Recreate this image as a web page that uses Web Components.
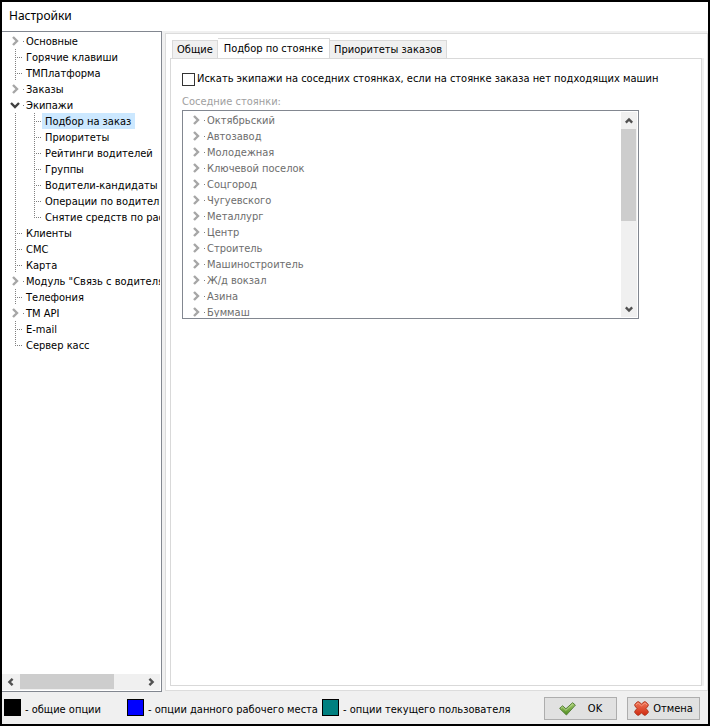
<!DOCTYPE html>
<html lang="ru">
<head>
    <meta charset="utf-8">
    <title>Настройки</title>
    <style>
        body {
            margin: 0;
            font-family: "DejaVu Sans Condensed", Tahoma, "Liberation Sans", sans-serif;
            font-size: 11px;
            line-height: 16px;
            color: #000;
        }
    </style>
</head>
<body>
    <settings-window></settings-window>

    <script>
        // Узел дерева: вложенные узлы передаются через slot
        class TreeNode extends HTMLElement {
            connectedCallback() {
                const label = this.getAttribute('label');
                const open = this.hasAttribute('open');
                const expandable = this.hasAttribute('expandable');
                const arrow = open ? 'M1 3l4 4 4-4' : 'M3 1l4 4-4 4';

                this.attachShadow({ mode: 'open' });
                this.shadowRoot.innerHTML = `
                <style>
                    :host {
                        display: block;
                        --dots: repeating-linear-gradient(to bottom, #808080 0 1px, transparent 1px 2px);
                    }

                    .row {
                        display: flex;
                        height: 16px;
                    }

                    .branch {
                        flex: none;
                        display: flex;
                        align-items: center;
                        box-sizing: border-box;
                        width: 16px;
                        padding: 0 0 0 3px;
                        border: 0;
                        background:
                            var(--dots) 8px 0 / 1px 100% no-repeat,
                            repeating-linear-gradient(to right, #808080 0 1px, transparent 1px 2px) 8px 8px / 8px 1px no-repeat;
                    }

                    :host([last]) .branch {
                        background-size: 1px 9px, 8px 1px;
                    }

                    button.branch {
                        background: linear-gradient(#808080, #808080) 16px 8px / 1px 1px no-repeat;
                        width: 18px;
                        margin-right: -2px;
                    }

                    svg {
                        flex: none;
                        width: 10px;
                        height: 10px;
                        fill: none;
                        stroke: ${open ? '#404040' : '#a6a6a6'};
                        stroke-width: 2.4;
                    }

                    .label {
                        padding: 0 4px 0 3px;
                        line-height: 18px;
                        white-space: nowrap;
                    }

                    :host([selected]) .label {
                        background-color: #cce8ff;
                    }

                    .children {
                        padding-left: 19px;
                        background: var(--dots) 8px 0 / 1px 100% no-repeat;
                    }
                </style>
                <div class="row">
                    ${expandable
                        ? `<button class="branch" type="button" aria-label="${label.replace(/"/g, '&quot;')}"><svg viewBox="0 0 10 10"><path d="${arrow}"/></svg></button>`
                        : '<span class="branch"></span>'}
                    <span class="label"></span>
                </div>
                ${open ? '<div class="children"><slot></slot></div>' : ''}
                `;
                this.shadowRoot.querySelector('.label').textContent = label;
            }
        }

        // Полоса прокрутки, вертикальная или горизонтальная
        class ScrollStrip extends HTMLElement {
            connectedCallback() {
                const horizontal = this.hasAttribute('horizontal');
                const back = horizontal ? 'M7 1L3 5l4 4' : 'M1 7l4-4 4 4';
                const forward = horizontal ? 'M3 1l4 4-4 4' : 'M1 3l4 4 4-4';

                this.attachShadow({ mode: 'open' });
                this.shadowRoot.innerHTML = `
                <style>
                    :host {
                        flex: none;
                        display: flex;
                        flex-direction: ${horizontal ? 'row' : 'column'};
                        ${horizontal ? 'height' : 'width'}: 16px;
                        background-color: #f0f0f0;
                    }

                    button {
                        flex: none;
                        display: flex;
                        align-items: center;
                        justify-content: center;
                        width: ${horizontal ? 18 : 16}px;
                        height: ${horizontal ? 16 : 17}px;
                        padding: 0;
                        border: 0;
                        background: none;
                    }

                    svg {
                        width: 8px;
                        height: 8px;
                        fill: none;
                        stroke: #505050;
                        stroke-width: 3;
                    }

                    .track {
                        flex: 1;
                    }

                    .thumb {
                        ${horizontal ? 'height' : 'width'}: 15px;
                        ${horizontal ? 'width' : 'height'}: var(--thumb, 50%);
                        background-color: #cdcdcd;
                    }
                </style>
                <button type="button" aria-label="Назад"><svg viewBox="0 0 10 10"><path d="${back}"/></svg></button>
                <div class="track"><div class="thumb"></div></div>
                <button type="button" aria-label="Вперёд"><svg viewBox="0 0 10 10"><path d="${forward}"/></svg></button>
                `;
            }
        }

        class SettingsTree extends HTMLElement {
            connectedCallback() {
                this.attachShadow({ mode: 'open' });
                this.shadowRoot.innerHTML = `
                <style>
                    :host {
                        display: flex;
                        flex-direction: column;
                        box-sizing: border-box;
                        min-width: 0;
                        border: 1px solid #828790;
                        border-left: 0;
                        padding: 1px 1px 1px 0;
                        background-color: white;
                    }

                    .nodes {
                        flex: 1;
                        padding: 0 0 0 5px;
                        overflow: hidden;
                    }

                    scroll-strip {
                        --thumb: 77%;
                    }
                </style>
                <div class="nodes">
                    <tree-node label="Основные" expandable></tree-node>
                    <tree-node label="Горячие клавиши"></tree-node>
                    <tree-node label="ТМПлатформа"></tree-node>
                    <tree-node label="Заказы" expandable></tree-node>
                    <tree-node label="Экипажи" expandable open>
                        <tree-node label="Подбор на заказ" selected></tree-node>
                        <tree-node label="Приоритеты"></tree-node>
                        <tree-node label="Рейтинги водителей"></tree-node>
                        <tree-node label="Группы"></tree-node>
                        <tree-node label="Водители-кандидаты"></tree-node>
                        <tree-node label="Операции по водителям"></tree-node>
                        <tree-node label="Снятие средств по расписанию" last></tree-node>
                    </tree-node>
                    <tree-node label="Клиенты"></tree-node>
                    <tree-node label="СМС"></tree-node>
                    <tree-node label="Карта"></tree-node>
                    <tree-node label='Модуль "Связь с водителями"' expandable></tree-node>
                    <tree-node label="Телефония"></tree-node>
                    <tree-node label="TM API" expandable></tree-node>
                    <tree-node label="E-mail"></tree-node>
                    <tree-node label="Сервер касс" last></tree-node>
                </div>
                <scroll-strip horizontal></scroll-strip>
                `;
            }
        }

        class ParkingList extends HTMLElement {
            connectedCallback() {
                const parkings = ['Октябрьский', 'Автозавод', 'Молодежная', 'Ключевой поселок', 'Соцгород',
                    'Чугуевского', 'Металлург', 'Центр', 'Строитель', 'Машиностроитель', 'Ж/д вокзал', 'Азина', 'Буммаш'];

                this.attachShadow({ mode: 'open' });
                this.shadowRoot.innerHTML = `
                <style>
                    :host {
                        display: flex;
                        box-sizing: border-box;
                        width: 90%;
                        height: 209px;
                        padding: 1px 1px 1px 5px;
                        border: 1px solid #828790;
                        color: #6d6d6d;
                    }

                    .nodes {
                        flex: 1;
                        overflow: hidden;
                    }

                    scroll-strip {
                        --thumb: 54%;
                    }
                </style>
                <div class="nodes">
                    ${parkings.map(name => `<tree-node label="${name}" expandable></tree-node>`).join('')}
                </div>
                <scroll-strip></scroll-strip>
                `;
            }
        }

        class SettingsTabs extends HTMLElement {
            connectedCallback() {
                this.attachShadow({ mode: 'open' });
                this.shadowRoot.innerHTML = `
                <style>
                    :host {
                        display: flex;
                        flex-direction: column;
                        min-width: 0;
                        padding: 4px 3px 4px 4px;
                        border: 1px solid #dcdcdc;
                        background-color: white;
                    }

                    .tabs {
                        display: flex;
                        align-items: flex-end;
                        padding-left: 2px;
                    }

                    .tabs button {
                        height: 18px;
                        padding: 1px 4px 0;
                        border: 1px solid #d9d9d9;
                        border-bottom: 0;
                        background-color: #f0f0f0;
                        font: inherit;
                        line-height: 16px;
                        color: inherit;
                        white-space: nowrap;
                    }

                    .tabs button + button {
                        border-left: 0;
                    }

                    .tabs .active {
                        height: 21px;
                        margin-bottom: -1px;
                        padding: 0 6px 1px;
                        background-color: white;
                    }

                    .page {
                        flex: 1;
                        padding: 12px 11px;
                        border: 1px solid #d9d9d9;
                        box-shadow: 2px 0 #f0f0f0;
                        margin-right: 2px;
                    }

                    .check {
                        display: flex;
                        align-items: center;
                        gap: 2px;
                        white-space: nowrap;
                    }

                    input {
                        flex: none;
                        appearance: none;
                        width: 13px;
                        height: 13px;
                        margin: 0;
                        border: 1px solid #333;
                        background-color: white;
                    }

                    input:checked {
                        background-color: #333;
                    }

                    .caption {
                        margin: 7px 0 0;
                        color: #a0a0a0;
                    }
                </style>
                <div class="tabs" role="tablist">
                    <button type="button" role="tab">Общие</button>
                    <button type="button" role="tab" class="active" aria-selected="true">Подбор по стоянке</button>
                    <button type="button" role="tab">Приоритеты заказов</button>
                </div>
                <div class="page" role="tabpanel">
                    <label class="check">
                        <input type="checkbox">
                        Искать экипажи на соседних стоянках, если на стоянке заказа нет подходящих машин
                    </label>
                    <p class="caption">Соседние стоянки:</p>
                    <parking-list></parking-list>
                </div>
                `;
            }
        }

        class LegendItem extends HTMLElement {
            connectedCallback() {
                this.attachShadow({ mode: 'open' });
                this.shadowRoot.innerHTML = `
                <style>
                    :host {
                        display: flex;
                        gap: 4px;
                        white-space: nowrap;
                    }

                    i {
                        flex: none;
                        box-sizing: border-box;
                        width: 17px;
                        height: 17px;
                        border: 1px solid black;
                        background-color: var(--swatch);
                    }

                    span {
                        padding-top: 3px;
                    }
                </style>
                <i></i><span><slot></slot></span>
                `;
            }
        }

        class DialogButton extends HTMLElement {
            connectedCallback() {
                this.attachShadow({ mode: 'open' });
                this.shadowRoot.innerHTML = `
                <style>
                    :host {
                        display: block;
                    }

                    button {
                        display: flex;
                        align-items: center;
                        justify-content: center;
                        gap: var(--gap, 4px);
                        box-sizing: border-box;
                        width: 73px;
                        height: 23px;
                        padding: 0;
                        border: 1px solid #adadad;
                        background-color: #e1e1e1;
                        font: inherit;
                        color: inherit;
                    }

                    button:hover {
                        border-color: #0078d7;
                        background-color: #e5f1fb;
                    }
                </style>
                <button type="button"><slot name="icon"></slot><slot></slot></button>
                `;
            }
        }

        class SettingsWindow extends HTMLElement {
            connectedCallback() {
                this.attachShadow({ mode: 'open' });
                this.shadowRoot.innerHTML = `
                <style>
                    :host {
                        display: flex;
                        flex-direction: column;
                        box-sizing: border-box;
                        min-height: 100vh;
                        border: 2px solid black;
                        background-color: #f0f0f0;
                    }

                    h1 {
                        margin: 0;
                        padding: 4px 7px 5px;
                        background-color: white;
                        font: 12px/20px "Noto Sans", "Open Sans", sans-serif;
                    }

                    main {
                        flex: 1;
                        display: grid;
                        grid-template-columns: 160px 1fr;
                        gap: 3px;
                    }

                    settings-tabs {
                        margin: 2px 0 1px;
                    }

                    footer {
                        display: flex;
                        align-items: center;
                        justify-content: space-between;
                        padding: 5px 8px 4px 2px;
                    }

                    .legend {
                        display: grid;
                        grid-template-columns: 123px 195px auto;
                    }

                    .buttons {
                        display: flex;
                        gap: 10px;
                    }

                    .ok {
                        --gap: 12px;
                    }

                    svg {
                        display: block;
                    }
                </style>
                <h1>Настройки</h1>
                <main>
                    <settings-tree></settings-tree>
                    <settings-tabs></settings-tabs>
                </main>
                <footer>
                    <div class="legend">
                        <legend-item style="--swatch: #000">- общие опции</legend-item>
                        <legend-item style="--swatch: #00f">- опции данного рабочего места</legend-item>
                        <legend-item style="--swatch: #008080">- опции текущего пользователя</legend-item>
                    </div>
                    <div class="buttons">
                        <dialog-button class="ok">
                            <svg slot="icon" width="17" height="14" viewBox="0 0 17 14">
                                <defs><linearGradient id="green" x2="0" y2="1"><stop stop-color="#a9cf72"/><stop offset="1" stop-color="#4d8a1c"/></linearGradient></defs>
                                <path d="M.6 6.4l3-2.6 3.3 3L13.6.7l2.8 2.4L7.4 13z" fill="url(#green)" stroke="#56803a" stroke-linejoin="round"/>
                                <path d="M2 6.3l1.6-1.2 3.3 3.2 6.8-6.2" fill="none" stroke="#cbe3a6" stroke-width=".7"/>
                            </svg>
                            OK
                        </dialog-button>
                        <dialog-button>
                            <svg slot="icon" width="15" height="15" viewBox="0 0 15 15">
                                <defs><linearGradient id="red" x2="0" y2="1"><stop stop-color="#f0785a"/><stop offset="1" stop-color="#cf2a10"/></linearGradient></defs>
                                <path d="M3.4.8h1.4l2.7 2.2L10.2.8h1.4l2.6 2.6v1.4L12 7.5l2.2 2.7v1.4l-2.6 2.6h-1.4L7.5 12l-2.7 2.2H3.4L.8 11.6v-1.4L3 7.5.8 4.8V3.4z" fill="url(#red)" stroke="#b03a22" stroke-linejoin="round"/>
                                <path d="M2 4l2-2 3.5 2.8L11 2l2 2" fill="none" stroke="#f7a489" stroke-width=".7"/>
                            </svg>
                            Отмена
                        </dialog-button>
                    </div>
                </footer>
                `;
            }
        }

        customElements.define('tree-node', TreeNode);
        customElements.define('scroll-strip', ScrollStrip);
        customElements.define('settings-tree', SettingsTree);
        customElements.define('parking-list', ParkingList);
        customElements.define('settings-tabs', SettingsTabs);
        customElements.define('legend-item', LegendItem);
        customElements.define('dialog-button', DialogButton);
        customElements.define('settings-window', SettingsWindow);
    </script>
</body>
</html>
